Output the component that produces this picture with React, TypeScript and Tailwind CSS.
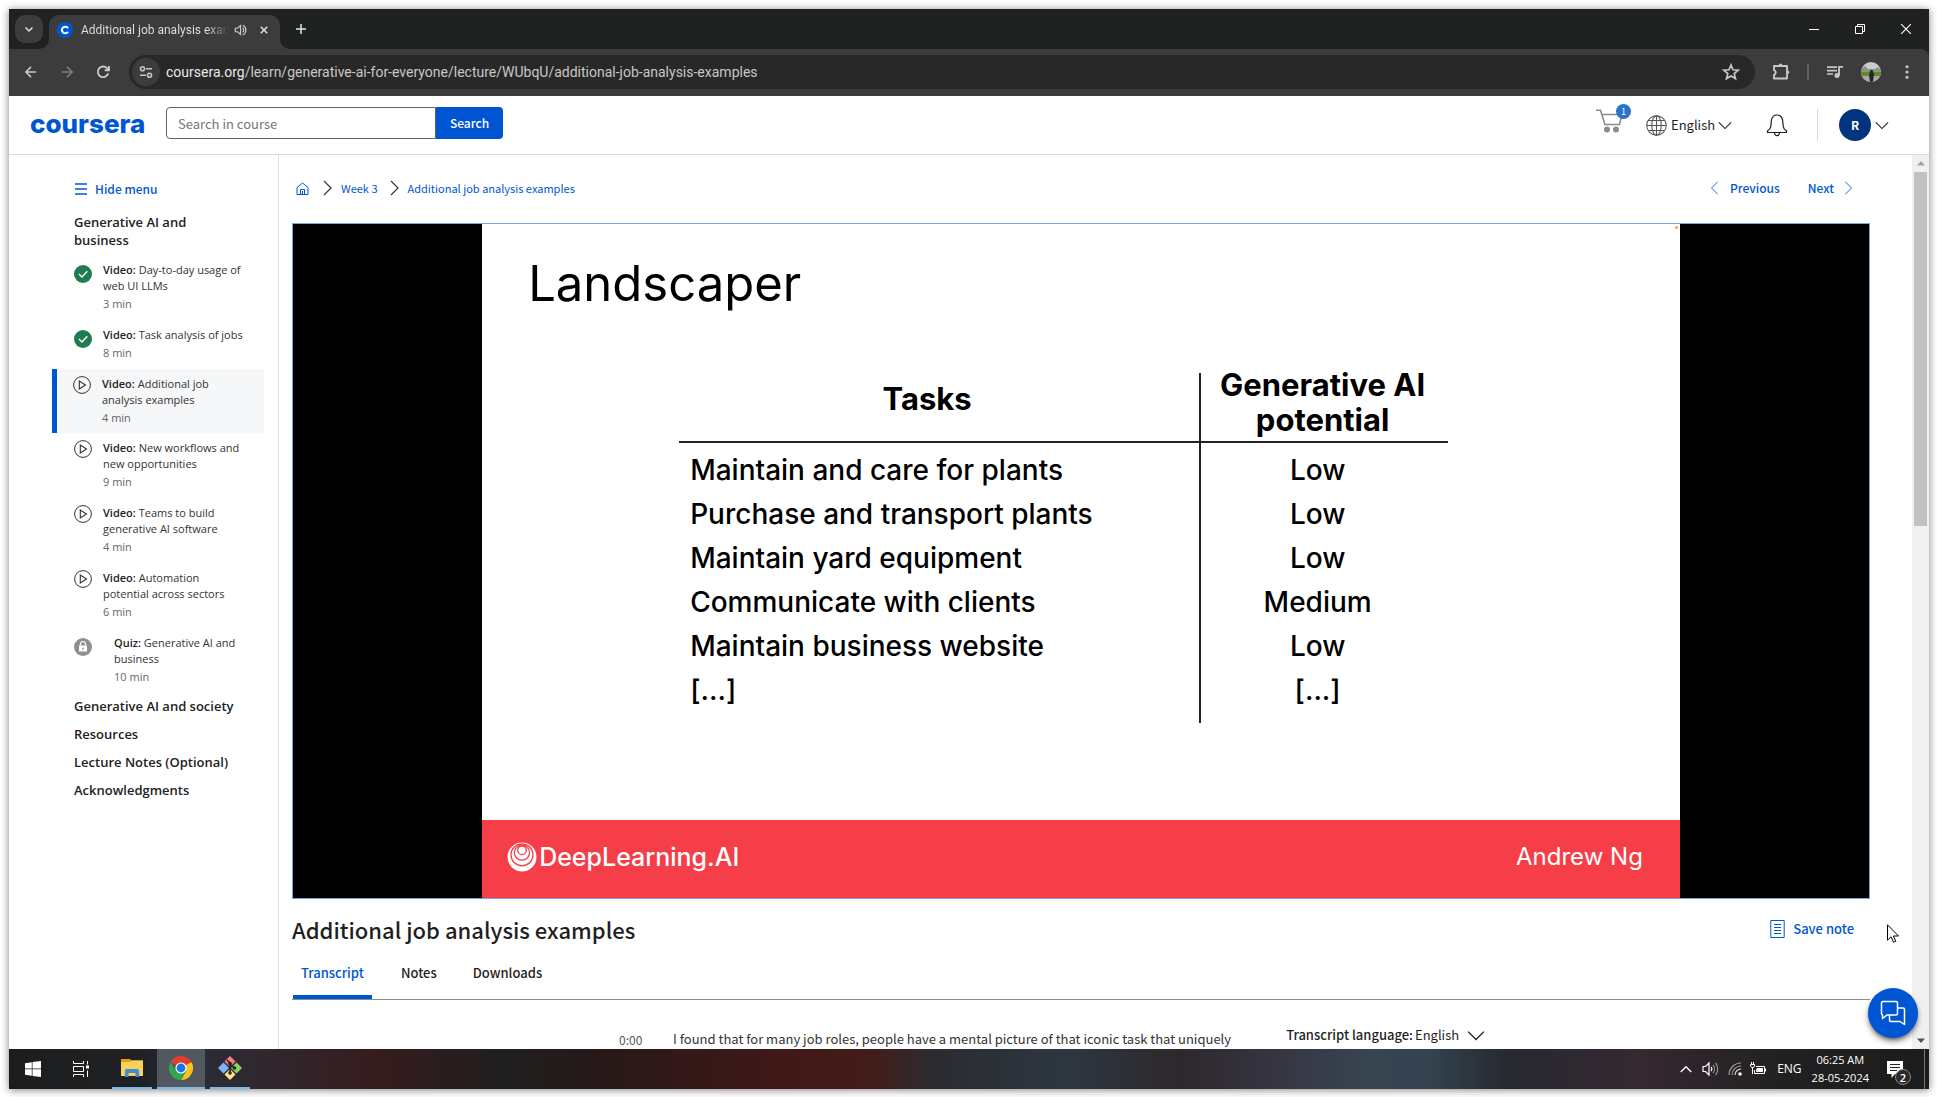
import React from "react";

const SRC = "font-['Noto_Sans_CJK_SC','Noto_Sans',sans-serif]";
const OPEN = "font-['Open_Sans','Noto_Sans',sans-serif]";
const GEO = "font-['Inter','Lato',sans-serif]";

type Dir = "down" | "left" | "right" | "up";
const CHEVRONS: Record<Dir, string> = {
  down: "M1 5l7 7 7-7",
  up: "M1 12l7-7 7 7",
  left: "M11 1L4 8l7 7",
  right: "M5 1l7 7-7 7",
};

function Chevron({ dir, className, w = 1.2 }: { dir: Dir; className: string; w?: number }) {
  return (
    <svg viewBox="0 0 16 16" className={className} fill="none" stroke="currentColor" strokeWidth={w} aria-hidden="true">
      <path d={CHEVRONS[dir]} />
    </svg>
  );
}

/* ---------- Browser chrome ---------- */

function TabStrip() {
  return (
    <div className="flex h-10 shrink-0 items-end bg-[#1f2221] font-['Roboto',sans-serif] text-[#e3e3e3]">
      <div className="flex h-full items-center pl-1.5 pr-1.5">
        <button aria-label="Search tabs" className="flex h-7 w-7 items-center justify-center rounded-[10px] bg-[#3c3c3c]">
          <Chevron dir="down" className="h-2 w-2" w={3} />
        </button>
      </div>
      <div className="relative flex h-[34px] w-[231px] items-center rounded-t-[10px] bg-[#3c3c3c] pl-2 pr-2">
        <svg viewBox="0 0 10 10" className="absolute -left-2.5 bottom-0 h-2.5 w-2.5" aria-hidden="true">
          <path d="M10 0v10H0A10 10 0 0 0 10 0z" fill="#3c3c3c" />
        </svg>
        <svg viewBox="0 0 10 10" className="absolute -right-2.5 bottom-0 h-2.5 w-2.5" aria-hidden="true">
          <path d="M0 0v10h10A10 10 0 0 1 0 0z" fill="#3c3c3c" />
        </svg>
        <svg viewBox="0 0 16 16" className="mb-1 h-4 w-4 shrink-0" aria-hidden="true">
          <circle cx="8" cy="8" r="8" fill="#0056d2" />
          <path d="M11 6.2A3.3 3.3 0 1 0 11 9.8" fill="none" stroke="#fff" strokeWidth="2" />
        </svg>
        <span className="mb-1 ml-2 w-[148px] overflow-hidden whitespace-nowrap bg-gradient-to-r from-[#e3e3e3] from-85% to-[#3c3c3c] bg-clip-text text-xs text-transparent">
          Additional job analysis exam
        </span>
        <svg viewBox="0 0 16 16" className="mb-1 ml-[5px] h-3.5 w-3.5 shrink-0" fill="none" stroke="#c7c7c7" strokeWidth="1.4" aria-hidden="true">
          <path d="M1.5 6v4H4l3.5 3V3L4 6zM9.8 5.5a3 3 0 0 1 0 5M10 2.5a6 6 0 0 1 0 11" />
        </svg>
        <button aria-label="Close tab" className="mb-1 ml-auto flex h-4 w-4 items-center justify-center">
          <svg viewBox="0 0 10 10" className="h-2 w-2" stroke="currentColor" strokeWidth="1.8">
            <path d="M1 1l8 8M9 1l-8 8" />
          </svg>
        </button>
      </div>
      <button aria-label="New tab" className="mb-2.5 ml-[11px] flex h-5 w-5 items-center justify-center">
        <svg viewBox="0 0 12 12" className="h-2.5 w-2.5" stroke="currentColor" strokeWidth="1.8">
          <path d="M6 0v12M0 6h12" />
        </svg>
      </button>
      <div className="ml-auto flex h-full text-white">
        <button aria-label="Minimize" className="flex w-[46px] items-center justify-center">
          <svg viewBox="0 0 10 10" className="h-2.5 w-2.5" stroke="currentColor"><path d="M0 5.5h10" /></svg>
        </button>
        <button aria-label="Restore" className="flex w-[46px] items-center justify-center">
          <svg viewBox="0 0 10 10" className="h-2.5 w-2.5" fill="none" stroke="currentColor"><path d="M.5 2.5h7v7h-7zM2.5 2.5v-2h7v7h-2" /></svg>
        </button>
        <button aria-label="Close" className="flex w-[46px] items-center justify-center">
          <svg viewBox="0 0 10 10" className="h-2.5 w-2.5" stroke="currentColor" strokeWidth="1.1"><path d="M0 0l10 10M10 0L0 10" /></svg>
        </button>
      </div>
    </div>
  );
}

function NavArrow({ flip }: { flip?: boolean }) {
  return (
    <svg viewBox="0 0 14 14" className="h-3 w-3" fill="none" stroke="currentColor" strokeWidth="1.9">
      <path d={flip ? "M1 7h12M7 1l6 6-6 6" : "M13 7H1M7 1L1 7l6 6"} />
    </svg>
  );
}

function Toolbar() {
  return (
    <div className="shrink-0 bg-[#1f2221]">
      <div className="flex h-[47px] items-center rounded-tr-lg bg-[#3c3c3c] pb-0.5 pr-2 font-['Roboto',sans-serif] text-[#c7c7c7]">
        <button aria-label="Back" className="ml-1 flex h-8 w-9 items-center justify-center"><NavArrow /></button>
        <button aria-label="Forward" className="flex h-8 w-9 items-center justify-center text-[#7d7d7d]"><NavArrow flip /></button>
        <button aria-label="Reload" className="flex h-8 w-9 items-center justify-center">
          <svg viewBox="0 0 14 14" className="h-3.5 w-3.5" fill="none" stroke="currentColor" strokeWidth="1.9">
            <path d="M12.2 8.4A5.3 5.3 0 1 1 11 3.2L12.6 5M13 1v4.3H8.7" />
          </svg>
        </button>
        <div className="ml-2 flex h-[34px] flex-1 items-center rounded-full bg-[#282828] pl-[3px] pr-3.5">
          <button aria-label="View site information" className="flex h-7 w-7 items-center justify-center rounded-full bg-[#3c3c3c]">
            <svg viewBox="0 0 14 14" className="h-3.5 w-3.5" fill="none" stroke="currentColor" strokeWidth="1.6">
              <circle cx="3.5" cy="3.8" r="2" /><path d="M7 3.8h6M1 10.2h6" /><circle cx="10.5" cy="10.2" r="2" />
            </svg>
          </button>
          <p className="ml-1.5 flex-1 whitespace-nowrap text-sm leading-5">
            <span className="text-[#e8e8e8]">coursera.org</span>/learn/generative-ai-for-everyone/lecture/WUbqU/additional-job-analysis-examples
          </p>
          <button aria-label="Bookmark this tab">
            <svg viewBox="0 0 20 20" className="h-5 w-5" fill="none" stroke="currentColor" strokeWidth="1.7">
              <path d="M10 3l2 4.8 5.2.4-4 3.4 1.3 5L10 13.9l-4.5 2.7 1.3-5-4-3.4L8 7.8z" />
            </svg>
          </button>
        </div>
        <button aria-label="Extensions" className="ml-3.5 flex h-7 w-6 items-center justify-center">
          <svg viewBox="0 0 18 18" className="h-[18px] w-[18px]" fill="none" stroke="currentColor" strokeWidth="1.9">
            <path d="M2 3h13v12.5H2v-3.700a2.400 2.400 0 0 0 0-4.600z" strokeLinejoin="round" />
            <path d="M6.800 2.400a1.800 1.800 0 0 1 3.600 0zM15.600 7.400a1.800 1.800 0 0 1 0 3.600z" fill="currentColor" stroke="none" />
          </svg>
        </button>
        <div className="ml-3.5 h-4 w-0.5 bg-[#5f5f5f]" />
        <button aria-label="Media controls" className="ml-3.5 flex h-7 w-6 items-center justify-center">
          <svg viewBox="0 0 16 14" className="h-3.5 w-4" fill="none" stroke="currentColor" strokeWidth="1.7">
            <path d="M0 2.200h10M0 5.600h10M0 9h6" /><circle cx="10" cy="10.400" r="2.500" fill="currentColor" stroke="none" />
            <path d="M12 10.500V1.900h4" strokeWidth="1.900" />
          </svg>
        </button>
        <button aria-label="Profile" className="ml-3.5 h-5 w-5">
          <svg viewBox="0 0 20 20" className="h-5 w-5">
            <clipPath id="pf"><circle cx="10" cy="10" r="10" /></clipPath>
            <g clipPath="url(#pf)">
              <rect width="20" height="20" fill="#c9cccb" /><path d="M0 7l4-3 3 3h7l3-2 3 3v3H0z" fill="#8c9488" />
              <path d="M0 10h20v5H0z" fill="#5f8a2b" /><path d="M0 14h20v6H0z" fill="#a9aba4" />
              <path d="M9.500 8h2l1.500 4-1 8H9l-1-7z" fill="#22262c" />
            </g>
          </svg>
        </button>
        <button aria-label="Menu" className="ml-3 flex h-7 w-7 items-center justify-center">
          <svg viewBox="0 0 4 16" className="h-3.5 w-1" fill="currentColor">
            <circle cx="2" cy="2" r="1.800" /><circle cx="2" cy="8" r="1.800" /><circle cx="2" cy="14" r="1.800" />
          </svg>
        </button>
      </div>
    </div>
  );
}

/* ---------- Course site header ---------- */

function SiteHeader() {
  return (
    <header className={`flex h-[59px] shrink-0 items-center border-b border-[#dadada] bg-white pl-[21px] text-[#1f1f1f] ${SRC}`}>
      <a href="#home" className="w-[115px] whitespace-nowrap pb-0.5 font-['Inter','Lato',sans-serif] text-[26px] font-extrabold leading-8 text-[#0056d2]">coursera</a>
      <form className="mb-1 ml-[21px] flex h-8" onSubmit={(e) => e.preventDefault()}>
        <input
          aria-label="Search in course"
          placeholder="Search in course"
          className="h-8 w-[270px] rounded-l border border-[#636363] pl-[11px] text-[13px] leading-5 placeholder:text-[#757575]"
        />
        <button className="h-8 w-[67px] rounded-r bg-[#0056d2] text-xs font-medium text-white">Search</button>
      </form>
      <button aria-label="Shopping cart, 1 item" className="relative mb-1.5 ml-auto h-8 w-9">
        <svg viewBox="0 0 28 26" className="absolute left-0 top-0.5 h-[26px] w-7" fill="none" stroke="#8b8b8b" strokeWidth="1.600">
          <path d="M0 2.200h4.500L9 16.500h14.500L26 6.500H6" /><circle cx="11" cy="21.500" r="3" fill="#8b8b8b" stroke="none" /><circle cx="20" cy="21.500" r="3" fill="#8b8b8b" stroke="none" />
        </svg>
        <span className="absolute -top-0.5 left-5 flex h-[15px] w-[15px] items-center justify-center rounded-full bg-[#2a73cc] text-[9px] leading-none text-white">1</span>
      </button>
      <div className="ml-3.5 flex items-center">
        <svg viewBox="0 0 20 20" className="h-[21px] w-[21px]" fill="none" stroke="#555" strokeWidth="1" aria-hidden="true">
          <circle cx="10" cy="10" r="9.300" /><ellipse cx="10" cy="10" rx="4.500" ry="9.300" /><path d="M10 .700v18.600M.700 10h18.600M2 5.300h16M2 14.700h16" />
        </svg>
        <select aria-label="Language" className="ml-1 w-[46px] appearance-none bg-transparent text-[13px] leading-5"><option>English</option></select>
        <Chevron dir="down" className="ml-px h-3.5 w-3.5" />
      </div>
      <button aria-label="Notifications" className="ml-[34px]">
        <svg viewBox="0 0 22 24" className="h-6 w-[22px]" fill="none" stroke="#1f1f1f" strokeWidth="1.200">
          <path d="M1.500 19.500v-1.600c2-1 3-2.400 3.300-4.500l.6-6.200C6 3.600 8 2 11 2s5 1.600 5.600 5.200l.6 6.200c.3 2.100 1.300 3.500 3.300 4.500v1.600zM8.500 20c.3 2 1.300 2.700 2.500 2.700s2.200-.7 2.500-2.700" />
        </svg>
      </button>
      <div className="ml-[29px] h-8 w-px bg-[#dadada]" />
      <button aria-label="Account" className="ml-[21px] mr-10 flex items-center">
        <span className="flex h-8 w-8 items-center justify-center rounded-full bg-[#00347f] text-xs font-bold text-white">R</span>
        <Chevron dir="down" className="ml-1 h-3.5 w-3.5" />
      </button>
    </header>
  );
}

/* ---------- Course outline ---------- */

type Status = "done" | "play" | "locked";
type Lesson = { kind: string; lines: string[]; mins: number; status: Status; current?: boolean };

const LESSONS: Lesson[] = [
  { kind: "Video:", lines: ["Day-to-day usage of", "web UI LLMs"], mins: 3, status: "done" },
  { kind: "Video:", lines: ["Task analysis of jobs"], mins: 8, status: "done" },
  { kind: "Video:", lines: ["Additional job", "analysis examples"], mins: 4, status: "play", current: true },
  { kind: "Video:", lines: ["New workflows and", "new opportunities"], mins: 9, status: "play" },
  { kind: "Video:", lines: ["Teams to build", "generative AI software"], mins: 4, status: "play" },
  { kind: "Video:", lines: ["Automation", "potential across sectors"], mins: 6, status: "play" },
  { kind: "Quiz:", lines: ["Generative AI and", "business"], mins: 10, status: "locked" },
];

function StatusIcon({ status }: { status: Status }) {
  return (
    <svg viewBox="0 0 18 18" className="h-[18px] w-[18px] shrink-0" fill="none" aria-hidden="true">
      {status === "done" && (
        <>
          <circle cx="9" cy="9" r="9" fill="#1d7c50" />
          <path d="M5 9l3 3 5.300-5.800" stroke="#fff" strokeWidth="1.400" />
        </>
      )}
      {status === "play" && (
        <>
          <circle cx="9" cy="9" r="8.400" stroke="#333" />
          <path d="M6.300 5v8l6.200-4z" stroke="#333" strokeWidth="1.100" />
        </>
      )}
      {status === "locked" && (
        <>
          <circle cx="9" cy="9" r="9" fill="#8f8f8f" />
          <path d="M5 7.500h8v6H5z" fill="#fff" />
          <path d="M6.500 7.500V6a2.500 2.500 0 0 1 5 0v1.500" stroke="#fff" strokeWidth="1.200" />
          <circle cx="9" cy="10.500" r=".9" fill="#8f8f8f" />
        </>
      )}
    </svg>
  );
}

function Sidebar() {
  return (
    <nav aria-label="Course outline" className={`w-[270px] shrink-0 border-r border-[#dedede] pl-[43px] pr-3.5 pt-6 text-[#1f1f1f] ${OPEN}`}>
      <button className={`ml-[23px] flex h-5 items-center gap-2 text-xs font-medium text-[#0056d2] ${SRC}`}>
        <svg viewBox="0 0 12 12" className="h-3 w-3" stroke="currentColor" strokeWidth="1.500" aria-hidden="true">
          <path d="M0 1h12M0 6h12M0 11h12" />
        </svg>
        Hide menu
      </button>
      <h2 className="ml-[22px] mt-3.5 text-[13px] font-semibold leading-[18px] text-[#222]">
        <a href="#business">Generative AI and<br />business</a>
      </h2>
      <ul className="mt-1.5">
        {LESSONS.map((l) => (
          <li key={l.lines[0] + l.mins}>
            <a
              href="#lesson"
              className={
                l.current
                  ? "flex border-l-5 border-[#0056d2] bg-[#f5f7f8] pb-[5px] pl-4 pt-[7px]"
                  : "flex pb-1.5 pl-[22px] pt-[7px]"
              }
            >
              <span className={l.status === "play" ? "pt-0" : "pt-[3px]"}><StatusIcon status={l.status} /></span>
              <span className={l.status === "locked" ? "ml-[22px] text-[11px] leading-4 text-[#333]" : "ml-[11px] text-[11px] leading-4 text-[#333]"}>
                <b className="font-semibold text-[#222]">{l.kind}</b> {l.lines[0]}
                {l.lines[1] && <><br />{l.lines[1]}</>}
                <span className="block leading-5 text-[#666]">{l.mins} min</span>
              </span>
            </a>
          </li>
        ))}
      </ul>
      <ul className="ml-[22px] mt-1 flex flex-col gap-2.5 text-[13px] font-semibold leading-[18px] text-[#222]">
        {["Generative AI and society", "Resources", "Lecture Notes (Optional)", "Acknowledgments"].map((t) => (
          <li key={t}><a href="#module">{t}</a></li>
        ))}
      </ul>
    </nav>
  );
}

/* ---------- Lecture ---------- */

const ROWS: [string, string][] = [
  ["Maintain and care for plants", "Low"],
  ["Purchase and transport plants", "Low"],
  ["Maintain yard equipment", "Low"],
  ["Communicate with clients", "Medium"],
  ["Maintain business website", "Low"],
  ["[...]", "[...]"],
];

function Slide() {
  return (
    <div className={`relative flex h-full w-[76%] flex-col bg-white text-black ${GEO}`}>
      <h1 className="ml-[46px] mt-7 text-[49px] leading-[64px]">Landscaper</h1>
      <table className="ml-[197px] mt-[57px] w-[769px] border-collapse">
        <thead>
          <tr className="border-b-2 border-[#222] text-[31px] font-semibold leading-[35px]">
            <th className="w-[521px] border-r-2 border-[#222] pb-[18px] pr-6 align-middle">Tasks</th>
            <th className="pb-1 pr-1 align-top"><span className="-mt-1.5 block">Generative AI<br />potential</span></th>
          </tr>
        </thead>
        <tbody className="text-[28px] font-medium leading-[44px]">
          {ROWS.map(([task, potential], i) => (
            <tr key={task}>
              <td className={i === 0 ? "border-r-2 border-[#222] pl-[11px] pt-[5px]" : i === 5 ? "border-r-2 border-[#222] pb-[11px] pl-[11px]" : "border-r-2 border-[#222] pl-[11px]"}>{task}</td>
              <td className={i === 0 ? "pr-3.5 pt-[5px] text-center" : i === 5 ? "pb-[11px] pr-3.5 text-center" : "pr-3.5 text-center"}>{potential}</td>
            </tr>
          ))}
        </tbody>
      </table>
      <footer className="mt-auto flex h-[78px] items-center bg-[#f63e48] pb-1 pl-[25px] pr-[37px] text-[25px] leading-8 text-white">
        <svg viewBox="0 0 30 30" className="h-[30px] w-[30px]" aria-hidden="true">
          <circle cx="15" cy="15" r="14.500" fill="#fff" />
          <g fill="none" stroke="#f63e48" strokeWidth="1.300">
            <circle cx="15" cy="12.800" r="11" /><circle cx="15" cy="10.600" r="7.600" /><circle cx="15" cy="8.300" r="4.300" />
          </g>
        </svg>
        <span className="ml-0.5 font-medium">DeepLearning.AI</span>
        <span className="ml-auto text-2xl">Andrew Ng</span>
      </footer>
      <span className="absolute right-0.5 top-0.5 h-[3px] w-[3px] rounded-full bg-[#f5a04c]" />
    </div>
  );
}

function Lecture() {
  return (
    <main className={`min-w-0 flex-1 overflow-hidden pl-[13px] pr-[42px] text-[#1f1f1f] ${SRC}`}>
      <div className="mt-[22px] flex h-[22px] items-center leading-5 text-[#0056d2]">
        <nav aria-label="Breadcrumb" className="flex items-center text-[11px]">
          <a href="#home" aria-label="Home" className="ml-1">
            <svg viewBox="0 0 13 13" className="h-[13px] w-[13px]" fill="none" stroke="currentColor" strokeWidth="1">
              <path d="M1 5.500L6.500 1 12 5.500v7H1zM4.500 12.500V7.500h4v5M6.500 9v3" />
            </svg>
          </a>
          <Chevron dir="right" className="ml-2.5 h-4 w-4 text-[#333]" />
          <a href="#week-3" className="ml-1.5">Week 3</a>
          <Chevron dir="right" className="ml-2 h-4 w-4 text-[#333]" />
          <a href="#lecture" className="ml-1.5">Additional job analysis examples</a>
        </nav>
        <a href="#previous" className="ml-auto flex items-center gap-2 text-xs font-medium">
          <Chevron dir="left" className="h-3.5 w-3.5" w={1} />Previous
        </a>
        <a href="#next" className="ml-7 mr-[15px] flex items-center gap-[7px] text-xs font-medium">
          Next<Chevron dir="right" className="h-3.5 w-3.5" w={1} />
        </a>
      </div>

      <section aria-label="Lecture video" className="mt-6 flex aspect-[1578/676] justify-center border border-[#7aa3e5] bg-black">
        <Slide />
      </section>

      <div className="mt-3 flex items-center">
        <h1 className="text-[22px] font-medium leading-9">Additional job analysis examples</h1>
        <button className="ml-auto mr-4 flex items-center gap-2 text-[13px] font-medium leading-5 text-[#0056d2]">
          <svg viewBox="0 0 15 18" className="h-[18px] w-[15px]" fill="none" stroke="currentColor" aria-hidden="true">
            <path d="M.8.500h13.400v17H.8zM4 4.500h7M4 7.500h7M4 10.500h7M4 13.500h7" />
          </svg>
          Save note
        </button>
      </div>

      <div role="tablist" className="mt-2 flex gap-[22px] border-b border-[#8b8b8b] pl-px text-[13px] font-medium leading-5">
        <button role="tab" aria-selected="true" className="h-11 rounded-t-sm border-b-4 border-[#0056d2] px-2 pb-1 text-[#0056d2]">Transcript</button>
        <button role="tab" aria-selected="false" className="h-11 border-b-4 border-transparent px-[7px] pb-1">Notes</button>
        <button role="tab" aria-selected="false" className="h-11 border-b-4 border-transparent px-[7px] pb-1">Downloads</button>
      </div>

      <div className="mt-[25px] flex text-[13px] leading-5">
        <div className="flex pl-[327px] pt-1">
          <button className="w-[54px] text-left text-xs leading-[22px] text-[#555]">0:00</button>
          <p className="whitespace-nowrap text-[#333]">I found that for many job roles, people have a mental picture of that iconic task that uniquely</p>
        </div>
        <label className="ml-auto mr-[385px] flex items-center self-start whitespace-nowrap">
          <span className="font-medium">Transcript language:</span>
          <select className="ml-0.5 w-[46px] appearance-none bg-transparent"><option>English</option></select>
          <Chevron dir="down" className="ml-1.5 h-[18px] w-[18px]" />
        </label>
      </div>
    </main>
  );
}

function Scrollbar() {
  return (
    <div className="flex w-[17px] shrink-0 flex-col items-center bg-[#f0f0f0]" aria-hidden="true">
      <svg viewBox="0 0 17 17" className="h-[17px] w-[17px]"><path d="M5 10.500h8L9 6z" fill="#a3a3a3" /></svg>
      <div className="h-[354px] w-[13px] bg-[#c1c1c1]" />
      <svg viewBox="0 0 17 17" className="mt-auto h-[17px] w-[17px]"><path d="M5 6.500h8L9 11z" fill="#505050" /></svg>
    </div>
  );
}

/* ---------- Desktop taskbar ---------- */

function Taskbar() {
  return (
    <div className={`flex h-10 shrink-0 items-stretch bg-[linear-gradient(90deg,#1c1c1c_0%,#1f2225_7%,#2b2c37_10%,#31262d_14%,#361c1e_19%,#1f1e1e_26%,#281818_31%,#401818_40%,#431d1a_45%,#2b2b30_48%,#2d3741_55%,#2e282c_61%,#363542_66%,#384552_71%,#33434f_74%,#27292f_78%,#352831_85%,#202020_93%,#1c1c1c_100%)] text-white ${OPEN}`}>
      <button aria-label="Start" className="flex w-12 items-center justify-center">
        <svg viewBox="0 0 16 16" className="h-4 w-4" fill="currentColor"><path d="M0 2.200L6.800 1.200v6.400H0zM7.500 1.100L16 0v7.600H7.500zM0 8.300h6.800v6.500L0 13.800zM7.500 8.300H16V16l-8.500-1.100z" /></svg>
      </button>
      <button aria-label="Task view" className="flex w-12 items-center justify-center">
        <svg viewBox="0 0 16 16" className="h-4 w-4" fill="none" stroke="currentColor">
          <path d="M.5 0v2.500h10V0M.5 16v-2.500h10V16M.5 5.500h10v5H.5zM14.500 0v3.500M14.500 9.500V16" /><path d="M13 4.500h3v3h-3z" fill="currentColor" stroke="none" />
        </svg>
      </button>
      <button aria-label="File Explorer" className="ml-[7px] flex w-10 items-center justify-center border-b-2 border-[#76b9ed]">
        <svg viewBox="0 0 22 18" className="h-[18px] w-[22px]">
          <path d="M0 0h9l1.500 1.500H22V17H0z" fill="#e69f0b" /><path d="M0 3h9l2-1.500h11V17H0z" fill="#fbd15b" />
          <path d="M4 18v-6.500a1.500 1.500 0 0 1 1.500-1.500h11a1.500 1.500 0 0 1 1.500 1.500V18h-3.500v-4h-7v4z" fill="#3d8fd1" />
        </svg>
      </button>
      <button aria-label="Google Chrome" className="ml-[5px] flex w-12 items-center justify-center border-b-2 border-[#76b9ed] bg-[#535860]">
        <svg viewBox="0 0 24 24" className="h-6 w-6">
          <path d="M12 12L1.600 6A12 12 0 0 1 22.400 6z" fill="#e33b2e" /><path d="M12 12L22.400 6A12 12 0 0 1 12 24l5.200-9z" fill="#fcc31e" />
          <path d="M12 12l5.200 3L12 24A12 12 0 0 1 1.600 6l5.200 9z" fill="#2da94f" /><path d="M12 6.500h10.700L22.400 6H12z" fill="#e33b2e" />
          <circle cx="12" cy="12" r="5.600" fill="#fff" /><circle cx="12" cy="12" r="4.400" fill="#1a73e8" />
        </svg>
      </button>
      <button aria-label="Git Bash" className="ml-[5px] flex w-10 items-center justify-center border-b-2 border-[#76b9ed]">
        <svg viewBox="0 0 24 24" className="h-6 w-6">
          <path d="M12 0l5.500 5.500-5.500 5.500-5.500-5.500z" fill="#f37f80" /><path d="M5.500 6.500L11 12l-5.500 5.500L0 12z" fill="#80b3ff" />
          <path d="M18.500 6.500L24 12l-5.500 5.500L13 12z" fill="#8ed35f" /><path d="M12 13l5.500 5.500L12 24l-5.500-5.500z" fill="#fbe68a" />
          <path d="M9 4l3 3v10M12 8l4 4" stroke="#22232b" strokeWidth="1.600" fill="none" />
          <circle cx="12" cy="7.500" r="1.800" fill="#22232b" /><circle cx="12" cy="17" r="1.800" fill="#22232b" /><circle cx="16.500" cy="12" r="1.800" fill="#22232b" />
        </svg>
      </button>
      <div className="ml-auto flex items-center text-xs leading-[18px]">
        <Chevron dir="up" className="h-3 w-3" w={1.8} />
        <svg viewBox="0 0 18 16" className="ml-2.5 h-4 w-[18px]" fill="none" stroke="currentColor" strokeWidth="1.200" aria-hidden="true">
          <path d="M1 5.500v5h2.500L7 14V2L3.500 5.500zM9 6a3 3 0 0 1 0 4" /><path d="M11 4a6 6 0 0 1 0 8M13.500 2a9 9 0 0 1 0 12" opacity=".5" />
        </svg>
        <svg viewBox="0 0 14 14" className="ml-2 h-3.5 w-3.5" fill="none" stroke="currentColor" strokeWidth="1.200" aria-hidden="true">
          <g opacity=".55"><path d="M1 13A12 12 0 0 1 13 1M4 13a9 9 0 0 1 9-9" /></g><path d="M7 13a6 6 0 0 1 6-6" opacity=".8" /><circle cx="12" cy="12" r="1.800" fill="currentColor" stroke="none" />
        </svg>
        <svg viewBox="0 0 17 14" className="ml-2 h-3.5 w-[17px]" fill="none" stroke="currentColor" aria-hidden="true">
          <path d="M6 4.500h8.500v7h-10V8M15.500 6.500v3" /><path d="M7 6.500h5.500v3H6.500z" fill="currentColor" /><path d="M1.500 0v3M3.500 0v3M.5 2.500h4V4L3.500 5.500h-2L.5 4zM2.500 6v6" />
        </svg>
        <span className="ml-2.5">ENG</span>
        <span className="ml-2.5 flex flex-col items-center whitespace-nowrap text-[11px]"><span>06:25 AM</span><span>28-05-2024</span></span>
        <button aria-label="2 new notifications" className="relative ml-[18px] h-8 w-6">
          <svg viewBox="0 0 16 18" className="absolute left-0 top-2 h-[18px] w-4"><path d="M0 0h16v13H8l-3.500 4v-4H0z" fill="#fff" /><path d="M3 3.500h10M3 6.500h10M3 9.500h7" stroke="#222" /></svg>
          <span className="absolute left-2 top-4 flex h-4 w-4 items-center justify-center rounded-full border border-[#8a8a8a] bg-[#2a2a2a] text-[11px] font-semibold leading-none">2</span>
        </button>
        <span className="ml-[13px] mr-1 h-10 w-px bg-[#777]" />
      </div>
    </div>
  );
}

export default function App() {
  return (
    <div className={`h-screen bg-white pb-2 pl-[9px] pr-2 pt-[9px] ${OPEN}`}>
      <div className="flex h-full flex-col bg-white shadow-[0_1px_8px_rgba(0,0,0,0.5)]">
        <TabStrip />
        <Toolbar />
        <SiteHeader />
        <div className="relative flex min-h-0 flex-1 overflow-hidden">
          <Sidebar />
          <Lecture />
          <Scrollbar />
          <button aria-label="Open chat" className="absolute bottom-[11px] right-[11px] flex h-[50px] w-[50px] items-center justify-center rounded-full bg-[#0056d2] text-white shadow-md shadow-black/50">
            <svg viewBox="0 0 26 26" className="h-[26px] w-[26px]" fill="none" stroke="currentColor" strokeWidth="1.500" strokeLinejoin="round">
              <path d="M3 1.500h13a1.500 1.500 0 0 1 1.500 1.500v10.500A1.500 1.500 0 0 1 16 15H7l-4.500 3.500V15L1.500 14V3A1.500 1.500 0 0 1 3 1.500z" />
              <path d="M17.500 8H23a1.500 1.500 0 0 1 1.500 1.500v15L20 21.500h-9A1.500 1.500 0 0 1 9.500 20v-5" />
            </svg>
          </button>
          <svg viewBox="0 0 12 19" className="absolute bottom-[106px] right-[30px] h-[19px] w-3" aria-hidden="true">
            <path d="M.5.800v15.400l3.600-3.400 2.400 5.500 2.300-1-2.400-5.300h5.100z" fill="#fff" stroke="#000" />
          </svg>
        </div>
        <Taskbar />
      </div>
    </div>
  );
}
